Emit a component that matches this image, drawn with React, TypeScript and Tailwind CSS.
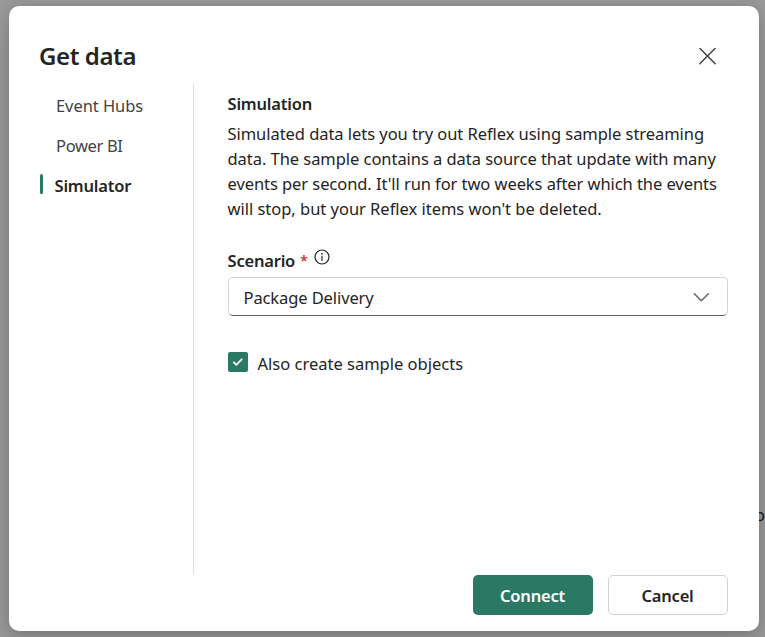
import React from "react";

const paragraph = [
  { text: "Simulated data lets you try out Reflex using sample streaming", cls: "tracking-[-0.05px]" },
  { text: "data. The sample contains a data source that update with many", cls: "tracking-[-0.05px]" },
  { text: "events per second. It'll run for two weeks after which the events", cls: "tracking-[-0.07px]" },
  { text: "will stop, but your Reflex items won't be deleted.", cls: "tracking-[-0.02px]" },
];

function NavItem({ label, cls }: { label: string; cls: string }) {
  return (
    <button className="flex h-10 items-center pl-4 text-[#424242]">
      <span className={cls}>{label}</span>
    </button>
  );
}

export default function App() {
  return (
    <div className="relative h-[637px] w-[765px] overflow-hidden bg-[#999999] pl-[9px] pt-[6px] font-['Noto_Sans','Open_Sans',sans-serif] text-[16.5px] text-[#242424]">
      <span className="absolute left-[755px] top-[503px] leading-6 text-[#10162e]">o</span>
      <div
        role="dialog"
        className="relative flex h-[625px] w-[750px] flex-col rounded-[10px] bg-white px-[31px] pb-4 shadow-[0_0_10px_rgba(0,0,0,0.12),0_14px_28px_rgba(0,0,0,0.14)]"
      >
        <header className="flex h-[78px] items-start justify-between">
          <h1 className="-ml-px pt-[34px] text-[24px] font-semibold leading-8 tracking-[-0.4px]">Get data</h1>
          <button aria-label="Close" className="mr-3 mt-[42px]">
            <svg width="17" height="17" viewBox="0 0 17 17" fill="none" stroke="#424242" strokeWidth="1.5" strokeLinecap="round">
              <path d="M0.8 0.3L16.2 15.7M16.2 0.3L0.8 15.7" />
            </svg>
          </button>
        </header>
        <div className="flex h-[491px]">
          <nav className="flex w-[154px] flex-col border-r border-[#e0e0e0] pt-[2px]">
            <NavItem label="Event Hubs" cls="tracking-[-0.06px]" />
            <NavItem label="Power BI" cls="tracking-[-0.35px]" />
            <button className="flex h-10 items-center font-semibold">
              <span className="mb-1 mr-[11.5px] h-5 w-[3px] rounded-full bg-[#2a7965]" />
              <span className="tracking-[-0.2px]">Simulator</span>
            </button>
          </nav>
          <main className="w-[534px] pl-[33.5px]">
            <h2 className="pt-[7px] font-semibold leading-[25px] tracking-[-0.2px]">Simulation</h2>
            <p className="mt-[5px] leading-[25px]">
              {paragraph.map((line) => (
                <span key={line.text} className="block whitespace-nowrap">
                  <span className={line.cls}>{line.text}</span>
                </span>
              ))}
            </p>
            <div className="mt-[27px] flex h-[25px] items-start leading-[25px]">
              <span className="font-semibold tracking-[-0.2px]">Scenario</span>
              <span className="ml-[5px] w-[9px] text-[14.5px] text-[#c50f1f]">*</span>
              <svg className="ml-[3.5px]" width="18" height="18" viewBox="0 0 18 18" fill="none">
                <circle cx="9" cy="9" r="7" stroke="#242424" strokeWidth="1.2" />
                <path d="M9 8v4.5" stroke="#242424" strokeWidth="1.2" strokeLinecap="round" />
                <circle cx="9" cy="5.7" r="0.85" fill="#242424" />
              </svg>
            </div>
            <button className="ml-[0.5px] mt-[4px] flex h-[39px] w-[500px] items-center justify-between rounded-[5px] border border-[#d1d1d1] border-b-[#616161] pl-[14.5px] pr-[18px]">
              <span className="pt-1 tracking-[-0.1px]">Package Delivery</span>
              <svg width="16" height="10" viewBox="0 0 16 10" fill="none" stroke="#616161" strokeWidth="1.4" strokeLinecap="round" strokeLinejoin="round">
                <path d="M1.3 1.8L8.3 8.8L15.3 1.8" />
              </svg>
            </button>
            <label className="ml-[0.5px] mt-[35px] flex items-center">
              <span className="mb-1 flex size-5 items-center justify-center rounded-[2px] bg-[#2a7965]">
                <svg width="12" height="10" viewBox="0 0 12 10" fill="none" stroke="white" strokeWidth="1.8" strokeLinecap="round" strokeLinejoin="round">
                  <path d="M1.8 5.4L4.3 7.8L9.7 2.3" />
                </svg>
              </span>
              <span className="ml-[9.5px] leading-[25px]">Also create sample objects</span>
            </label>
          </main>
        </div>
        <footer className="flex justify-end gap-[15px] font-semibold">
          <button className="h-10 w-[120px] rounded-[5px] bg-[#2a7965] pr-px pt-[2px] text-white tracking-[-0.2px]">Connect</button>
          <button className="h-10 w-[120px] rounded-[5px] border border-[#d1d1d1] pr-px pt-[2px] tracking-[-0.2px]">Cancel</button>
        </footer>
      </div>
    </div>
  );
}
